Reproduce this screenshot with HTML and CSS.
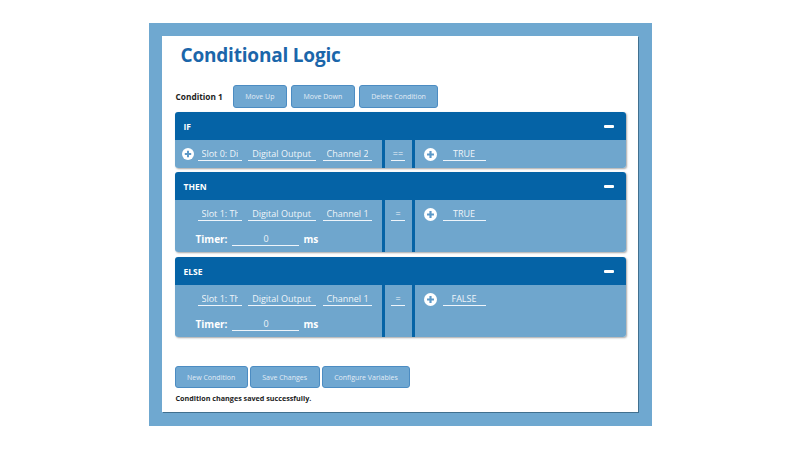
FILE: index.html
```html
<!DOCTYPE html>
<html lang="en">
  <head>
    <meta charset="UTF-8" />
    <meta name="viewport" content="width=device-width, initial-scale=1.0" />
    <title>Conditional Logic</title>
    <link rel="stylesheet" href="styles.css">
  </head>
  <body>
    <div class="frame">
      <div class="page">
        <h1>Conditional Logic</h1>

        <div class="cond-bar">
          <span class="cond-name">Condition 1</span>
          <button class="btn">Move Up</button>
          <button class="btn">Move Down</button>
          <button class="btn">Delete Condition</button>
        </div>

        <!-- IF -->
        <div class="panel">
          <div class="panel-head">
            <span>IF</span>
            <span class="minus"></span>
          </div>
          <div class="panel-body">
            <div class="col-left">
              <div class="row">
                <svg class="plus" viewBox="0 0 12 12"><circle cx="6" cy="6" r="6" fill="#fff"/><path d="M6 2.8v6.4M2.8 6h6.4" stroke="#5d99c8" stroke-width="2"/></svg>
                <input class="field w-slot" value="Slot 0: Digital Input" readonly />
                <input class="field w-type" value="Digital Output" readonly />
                <input class="field w-chan" value="Channel 2" readonly />
              </div>
            </div>
            <div class="col-op">
              <input class="field w-op" value="==" readonly />
            </div>
            <div class="col-right">
              <div class="row">
                <svg class="plus" viewBox="0 0 12 12"><circle cx="6" cy="6" r="6" fill="#fff"/><path d="M6 2.8v6.4M2.8 6h6.4" stroke="#5d99c8" stroke-width="2"/></svg>
                <input class="field w-val" value="TRUE" readonly />
              </div>
            </div>
          </div>
        </div>

        <!-- THEN -->
        <div class="panel">
          <div class="panel-head">
            <span>THEN</span>
            <span class="minus"></span>
          </div>
          <div class="panel-body">
            <div class="col-left">
              <div class="row">
                <span class="plus-space"></span>
                <input class="field w-slot" value="Slot 1: Thermocouple" readonly />
                <input class="field w-type" value="Digital Output" readonly />
                <input class="field w-chan" value="Channel 1" readonly />
              </div>
              <div class="row timer">
                <label>Timer:</label>
                <input class="field w-timer" value="0" readonly />
                <span>ms</span>
              </div>
            </div>
            <div class="col-op">
              <input class="field w-op" value="=" readonly />
            </div>
            <div class="col-right">
              <div class="row">
                <svg class="plus" viewBox="0 0 12 12"><circle cx="6" cy="6" r="6" fill="#fff"/><path d="M6 2.8v6.4M2.8 6h6.4" stroke="#5d99c8" stroke-width="2"/></svg>
                <input class="field w-val" value="TRUE" readonly />
              </div>
            </div>
          </div>
        </div>

        <!-- ELSE -->
        <div class="panel">
          <div class="panel-head">
            <span>ELSE</span>
            <span class="minus"></span>
          </div>
          <div class="panel-body">
            <div class="col-left">
              <div class="row">
                <span class="plus-space"></span>
                <input class="field w-slot" value="Slot 1: Thermocouple" readonly />
                <input class="field w-type" value="Digital Output" readonly />
                <input class="field w-chan" value="Channel 1" readonly />
              </div>
              <div class="row timer">
                <label>Timer:</label>
                <input class="field w-timer" value="0" readonly />
                <span>ms</span>
              </div>
            </div>
            <div class="col-op">
              <input class="field w-op" value="=" readonly />
            </div>
            <div class="col-right">
              <div class="row">
                <svg class="plus" viewBox="0 0 12 12"><circle cx="6" cy="6" r="6" fill="#fff"/><path d="M6 2.8v6.4M2.8 6h6.4" stroke="#5d99c8" stroke-width="2"/></svg>
                <input class="field w-val" value="FALSE" readonly />
              </div>
            </div>
          </div>
        </div>

        <div class="actions">
          <button class="btn btn-lg">New Condition</button>
          <button class="btn btn-lg">Save Changes</button>
          <button class="btn btn-lg">Configure Variables</button>
        </div>
        <p class="status">Condition changes saved successfully.</p>
      </div>
    </div>
  </body>
</html>
```

FILE: styles.css
```css
* {
  box-sizing: border-box;
  font-family: "Open Sans", sans-serif;
}
body {
  margin: 0;
  padding: 23px 0 0;
  background: #ffffff;
}
.frame {
  width: 503px;
  height: 403px;
  margin: 0 auto;
  padding: 13px 14px 14px 13px;
  background: #6fa8d0;
}
.page {
  height: 376px;
  padding: 7px 12px 0 13px;
  background: #ffffff;
  box-shadow: 1px 1px 0 #41708f;
}
h1 {
  margin: 0 0 18px 6px;
  height: 24px;
  line-height: 24px;
  font-size: 19px;
  letter-spacing: -0.2px;
  font-weight: 700;
  color: #1b66aa;
}
.cond-bar {
  display: flex;
  align-items: center;
  gap: 4px;
  height: 23px;
  margin-bottom: 4px;
}
.cond-name {
  margin: 0 6px 0 1px;
  font-size: 8.3px;
  font-weight: 700;
  color: #1d1d1d;
}
.btn {
  height: 23px;
  padding: 0 11.5px;
  border: 1px solid #4c8cc2;
  border-radius: 3px;
  background: #6fa7d1;
  color: #e2ecf5;
  font-size: 7px;
  cursor: pointer;
}
.btn-lg {
  height: 22px;
}
.panel {
  margin-bottom: 4px;
  border-radius: 3px;
  overflow: hidden;
  box-shadow: 1px 1px 2px rgba(0, 0, 0, 0.35);
}
.panel + .panel + .panel {
  margin-top: 5px;
}
.panel-head {
  display: flex;
  align-items: center;
  justify-content: space-between;
  height: 28px;
  padding: 0 12px 0 9px;
  background: #0563a6;
  color: #ffffff;
  font-size: 8.5px;
  font-weight: 700;
}
.minus {
  width: 10px;
  height: 3px;
  border-radius: 1px;
  background: #ffffff;
}
.panel-body {
  display: flex;
  background: #6fa6cd;
}
.col-left {
  width: 207px;
  padding: 1px 0 1px 7px;
}
.col-op {
  width: 33px;
  padding: 1px 0;
  border-left: 3px solid #0563a6;
  border-right: 3px solid #0563a6;
  display: flex;
  justify-content: center;
  align-items: flex-start;
}
.col-op .field {
  margin-top: 6px;
}
.col-right {
  flex: 1;
  padding: 1px 0 1px 9px;
}
.row {
  display: flex;
  align-items: center;
  height: 26px;
}
.plus {
  width: 12px;
  height: 12px;
  margin-right: 4px;
}
.col-right .plus {
  width: 13px;
  height: 13px;
  margin-right: 6px;
}
.plus-space {
  width: 12px;
  margin-right: 4px;
}
.field {
  height: 14px;
  padding: 0 4px;
  margin-right: 6px;
  border: none;
  border-bottom: 1px solid #eef4fa;
  background: transparent;
  color: #eef4f9;
  font-size: 9px;
  line-height: 13px;
  text-align: center;
  outline: none;
}
.w-slot { width: 44px; }
.w-type { width: 68px; }
.w-chan { width: 49px; margin-left: 1px; }
.w-op { width: 14px; margin: 0; padding: 0; }
.w-val { width: 43px; }
.timer {
  height: 24px;
  padding-left: 14px;
  color: #ffffff;
  font-size: 10px;
  font-weight: 700;
}
.timer label {
  margin-right: 5px;
}
.w-timer {
  width: 67px;
  margin-right: 4px;
  font-weight: 400;
}
.actions {
  display: flex;
  gap: 2px;
  margin-top: 29px;
}
.status {
  margin: 5px 0 0 1px;
  font-size: 7.2px;
  font-weight: 700;
  color: #222222;
}
```
